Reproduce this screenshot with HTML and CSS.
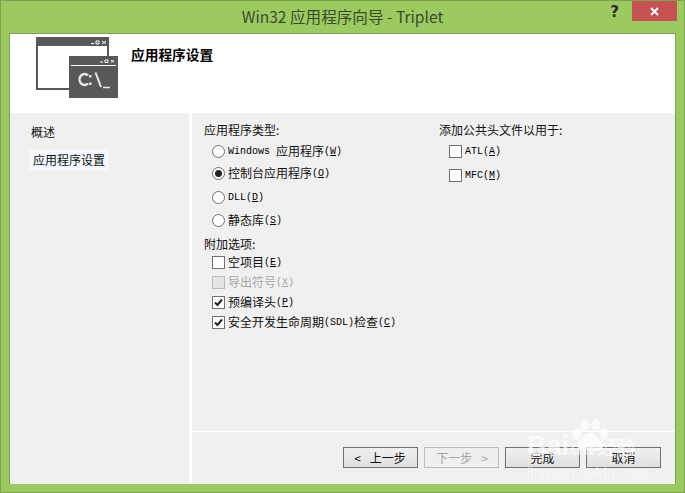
FILE: index.html
```html
<!DOCTYPE html>
<html lang="zh">
<head>
<meta charset="utf-8">
<title>Win32 应用程序向导 - Triplet</title>
<link rel="stylesheet" href="styles.css">
</head>
<body>
<div class="window">
  <div class="titlebar">
    <div class="title">Win32 应用程序向导 - Triplet</div>
    <div class="help">?</div>
    <div class="close"><svg width="9" height="9" viewBox="0 0 9 9"><path d="M1 1l7 7M8 1l-7 7" stroke="#fff" stroke-width="2" fill="none"/></svg></div>
  </div>
  <div class="client">
    <div class="header">
      <svg class="logo" width="83" height="61" viewBox="0 0 83 61">
        <rect x="1" y="3" width="71" height="49" fill="#fff" stroke="#58585a" stroke-width="2"/>
        <rect x="0" y="0" width="73" height="9" fill="#58585a"/>
        <path d="M55 6.500h3M60 4h3v3h-3zM66 4l4 3M70 4l-4 3" stroke="#fff" fill="none"/>
        <rect x="33" y="19" width="49" height="42" fill="#58585a"/>
        <path d="M35 28.500h45" stroke="#fff"/>
        <path d="M64 25h3M69 23h3v2.500h-3zM75 23l3 2.500M78 23l-3 2.500" stroke="#fff" fill="none"/>
        <path d="M52 38.500a5 5.500 0 1 0 0 8" stroke="#e8e8e8" stroke-width="2.500" fill="none"/>
        <path d="M53 38h2.500v2.500h-2.500zM53 45.500h2.500v2.500h-2.500z" fill="#e8e8e8"/>
        <path d="M59.500 35.500l5.500 14.500" stroke="#e8e8e8" stroke-width="2" fill="none"/>
        <path d="M67 50.500h7" stroke="#e8e8e8" stroke-width="1.500" fill="none"/>
      </svg>
      <div class="heading">应用程序设置</div>
    </div>
    <div class="body">
      <nav class="side">
        <div class="nav-item">概述</div>
        <div class="nav-item selected">应用程序设置</div>
      </nav>
      <main class="panel">
        <div class="settings">
          <div class="col col-left">
            <div class="group-label">应用程序类型:</div>
            <div class="row r-first"><span class="radio"></span><span class="mono">Windows </span>应用程序<span class="mono">(<u>W</u>)</span></div>
            <div class="row r-gap1"><span class="radio on"></span>控制台应用程序<span class="mono">(<u>O</u>)</span></div>
            <div class="row r-gap2"><span class="radio"></span><span class="mono">DLL(<u>D</u>)</span></div>
            <div class="row r-gap3"><span class="radio"></span>静态库<span class="mono">(<u>S</u>)</span></div>
            <div class="group-label second">附加选项:</div>
            <div class="row c-first"><span class="check"></span>空项目<span class="mono">(<u>E</u>)</span></div>
            <div class="row c-gap disabled"><span class="check off"></span>导出符号<span class="mono">(<u>X</u>)</span></div>
            <div class="row c-gap"><span class="check"><svg width="9" height="9" viewBox="0 0 9 9"><path d="M1 4.500l2.500 2.500 4.500-5.500" stroke="#222" stroke-width="2" fill="none"/></svg></span>预编译头<span class="mono">(<u>P</u>)</span></div>
            <div class="row c-gap"><span class="check"><svg width="9" height="9" viewBox="0 0 9 9"><path d="M1 4.500l2.500 2.500 4.500-5.500" stroke="#222" stroke-width="2" fill="none"/></svg></span>安全开发生命周期<span class="mono">(SDL)</span>检查<span class="mono">(<u>C</u>)</span></div>
          </div>
          <div class="col col-right">
            <div class="group-label">添加公共头文件以用于:</div>
            <div class="row r-first right-row"><span class="check"></span><span class="mono">ATL(<u>A</u>)</span></div>
            <div class="row right-gap right-row"><span class="check"></span><span class="mono">MFC(<u>M</u>)</span></div>
          </div>
        </div>
        <div class="footer">
          <button class="btn"><span class="chev">&lt;</span>上一步</button>
          <button class="btn dim">下一步<span class="chev">&gt;</span></button>
          <button class="btn">完成</button>
          <button class="btn">取消</button>
        </div>
      </main>
    </div>
  </div>
  <div class="watermark">
    <svg class="paw" width="38" height="34" viewBox="0 0 38 34">
      <g fill="#fff" fill-opacity="0.7">
        <ellipse cx="6" cy="15" rx="4.500" ry="6"/>
        <ellipse cx="14" cy="6" rx="4.500" ry="6"/>
        <ellipse cx="25" cy="6" rx="4.500" ry="6"/>
        <ellipse cx="33" cy="15" rx="4.500" ry="6"/>
        <path d="M19 14c6 0 10 7 12 11 2 5-3 8-7 7-3-1-7-1-10 0-4 1-9-2-7-7 2-4 6-11 12-11z"/>
      </g>
    </svg>
    <div class="wm-top"><span class="wm-bai">Bai</span><span class="wm-du">du</span><span class="wm-jy">经验</span></div>
    <div class="wm-bottom">jingyan.baidu.com</div>
  </div>
</div>
</body>
</html>
```
FILE: styles.css
```css
* { box-sizing: border-box; }
html, body { margin: 0; padding: 0; }
body {
  width: 685px;
  height: 493px;
  overflow: hidden;
  font-family: "Noto Sans CJK SC", "Liberation Sans", sans-serif;
  font-size: 12px;
  color: #111;
}
.window {
  position: relative;
  width: 685px;
  height: 493px;
  background: #9bca60;
  border: 1px solid #7fa24e;
  display: flex;
  flex-direction: column;
  padding: 0 8px 8px 8px;
}
.titlebar {
  height: 32px;
  flex: none;
  display: flex;
  position: relative;
}
.title {
  flex: 1;
  text-align: center;
  font-size: 15.600px;
  line-height: 30px;
  color: #3b4a2c;
}
.help {
  position: absolute;
  right: 57px;
  top: 0;
  font: bold 15px/22px "DejaVu Sans", sans-serif;
  color: #2b2b2b;
}
.close {
  position: absolute;
  right: -1px;
  top: 0;
  width: 45px;
  height: 20px;
  background: #c75050;
  display: flex;
  align-items: center;
  justify-content: center;
}
.client {
  flex: 1;
  display: flex;
  flex-direction: column;
  background: #fff;
  border-top: 1px solid #7fa24e;
  border-right: 1px solid #7fa24e;
  border-left: 1px solid #7fa24e;
  min-height: 0;
}
.header {
  height: 79px;
  flex: none;
  display: flex;
  padding: 3px 0 0 26px;
  background: #fff;
}
.logo { display: block; flex: none; }
.heading {
  margin: 7px 0 0 12px;
  font-size: 13.700px;
  font-weight: 700;
  line-height: 20px;
  color: #000;
}
.body {
  flex: 1;
  display: flex;
  gap: 3px;
  min-height: 0;
}
.side {
  width: 179px;
  flex: none;
  background: #f0f0f0;
  padding: 8px 0 0 19px;
}
.nav-item {
  width: 80px;
  height: 22px;
  line-height: 22px;
  padding-left: 2px;
}
.nav-item.selected {
  margin-top: 6px;
  padding-left: 4px;
  background: #f4f7fc;
}
.panel {
  flex: 1;
  background: #f0f0f0;
  display: flex;
  flex-direction: column;
}
.settings {
  flex: 1;
  display: flex;
  padding: 8px 0 0 12px;
  border-bottom: 1px solid #fff;
}
.col-left { width: 235px; flex: none; }
.group-label { height: 18px; line-height: 18px; }
.group-label.second { margin-top: 6px; }
.row {
  display: flex;
  align-items: center;
  height: 18px;
  line-height: 18px;
  padding-left: 8px;
  white-space: pre;
}
.r-first { margin-top: 3px; }
.r-gap1 { margin-top: 4px; }
.r-gap2 { margin-top: 6px; }
.r-gap3 { margin-top: 5px; }
.c-first { margin-top: 0; }
.c-gap { margin-top: 2px; }
.right-row { padding-left: 10px; }
.right-row .check { margin-right: 3px; }
.right-gap { margin-top: 6px; }
.mono {
  font-family: "Liberation Mono", monospace;
  font-size: 10px;
  line-height: 16px;
  padding-top: 2px;
  color: #000;
}
.disabled .mono { color: #a6a6a6; }
.radio {
  width: 13px;
  height: 13px;
  border: 1px solid #707070;
  border-radius: 50%;
  background: #fff;
  margin-right: 3px;
  flex: none;
  display: flex;
  align-items: center;
  justify-content: center;
}
.radio.on::after {
  content: "";
  width: 7px;
  height: 7px;
  border-radius: 50%;
  background: #222;
}
.check {
  width: 13px;
  height: 13px;
  border: 1px solid #707070;
  background: #fff;
  margin-right: 3px;
  flex: none;
  display: flex;
  align-items: center;
  justify-content: center;
}
.check.off { background: #e6e6e6; border-color: #bcbcbc; }
.disabled { color: #a6a6a6; }
.footer {
  height: 52px;
  flex: none;
  display: flex;
  gap: 6px;
  padding: 15px 0 0 151px;
}
.btn {
  width: 75px;
  height: 21px;
  padding: 0;
  border: 1px solid #707070;
  background: linear-gradient(#f0f0f0, #e0e0e0);
  font: inherit;
  line-height: 18px;
  color: #111;
}
.btn.dim { color: #a6a6a6; border-color: #bcbcbc; background: #efefef; }
.chev { display: inline-block; margin: 0 9px 0 -1px; }
.btn.dim .chev { margin: 0 -1px 0 9px; }
.watermark {
  position: absolute;
  left: 526px;
  top: 418px;
  width: 125px;
  height: 60px;
  color: rgba(255, 255, 255, 0.7);
  font-family: "Liberation Sans", "Noto Sans CJK SC", sans-serif;
  pointer-events: none;
}
.paw { position: absolute; left: 44px; top: 0; }
.wm-top {
  display: flex;
  align-items: baseline;
  padding-top: 13px;
  height: 46px;
  font-weight: 700;
  white-space: nowrap;
}
.wm-bai { font-size: 27px; line-height: 28px; }
.wm-du { font-size: 20px; line-height: 28px; margin-left: 1px; color: rgba(255, 255, 255, 0.5); }
.wm-jy { font-size: 19px; line-height: 28px; font-family: "Noto Sans CJK SC", sans-serif; margin-left: 3px; }
.wm-bottom { font-size: 15px; line-height: 16px; color: rgba(255, 255, 255, 0.45); white-space: nowrap; }
```
